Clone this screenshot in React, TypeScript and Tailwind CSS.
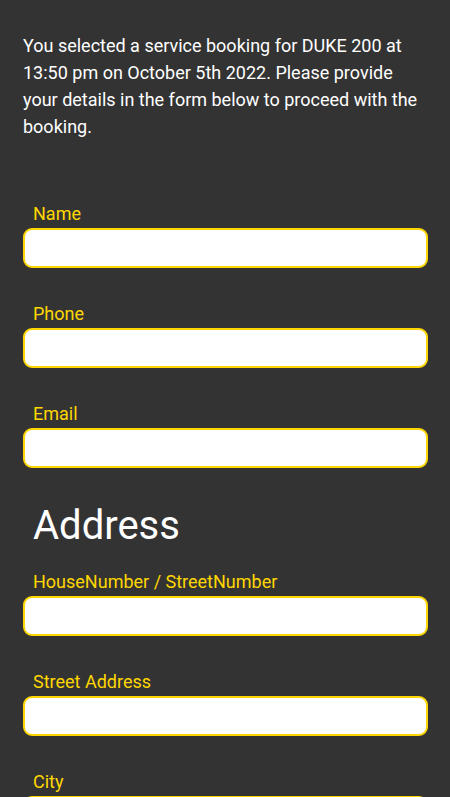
import React from 'react';

const personal = ["Name", "Phone", "Email"];
const address = ["HouseNumber / StreetNumber", "Street Address", "City"];

const Field = ({ label }: { label: string }) => (
  <div className="flex flex-col mb-[33px]">
    <label className="pl-[10px] pt-[1px] text-[18px] leading-[24px] text-[#ffd700]">{label}</label>
    <input
      type="text"
      className="mt-[2px] h-[40px] w-full rounded-[9px] border-2 border-[#ffd700] bg-white px-3 text-black outline-none"
    />
  </div>
);

export default function App() {
  return (
    <div
      className="min-h-[797px] bg-[#333333] pl-[23px] pr-[22px] pt-[32px]"
      style={{ fontFamily: 'Roboto, "Liberation Sans", sans-serif' }}
    >
      <p className="text-[18px] leading-[27px] text-white">
        You selected a service booking for DUKE 200 at 13:50 pm on October 5th 2022. Please provide your details in the form below to proceed with the booking.
      </p>
      <form className="mt-[61px]">
        {personal.map((l) => (
          <Field key={l} label={l} />
        ))}
        <h2 className="pl-[10px] text-[40px] leading-[50px] text-white mb-[18px]">Address</h2>
        {address.map((l) => (
          <Field key={l} label={l} />
        ))}
      </form>
    </div>
  );
}
